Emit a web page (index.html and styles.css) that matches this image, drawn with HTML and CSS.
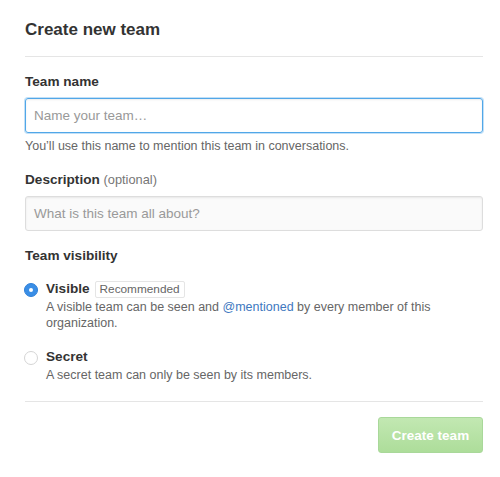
FILE: index.html
```html
<!DOCTYPE html>
<html>
<head>
<meta charset="utf-8">
<link rel="stylesheet" href="styles.css">
</head>
<body>
<div class="page">
  <h2 class="title">Create new team</h2>
  <div class="field">
    <label class="label">Team name</label>
    <div class="input focused"><span class="ph">Name your team…</span></div>
    <p class="note">You’ll use this name to mention this team in conversations.</p>
  </div>
  <div class="field">
    <label class="label">Description <span class="opt">(optional)</span></label>
    <div class="input muted"><span class="ph">What is this team all about?</span></div>
  </div>
  <div class="field vis">
    <label class="label">Team visibility</label>
    <div class="option first">
      <span class="radio on"></span>
      <div class="opt-body">
        <div class="opt-title">Visible <span class="badge">Recommended</span></div>
        <p class="opt-desc">A visible team can be seen and <span class="link">@mentioned</span> by every member of this organization.</p>
      </div>
    </div>
    <div class="option second">
      <span class="radio"></span>
      <div class="opt-body">
        <div class="opt-title">Secret</div>
        <p class="opt-desc">A secret team can only be seen by its members.</p>
      </div>
    </div>
  </div>
  <div class="actions">
    <button class="btn">Create team</button>
  </div>
</div>
</body>
</html>
```
FILE: styles.css
```css
* { box-sizing: border-box; }
body {
  margin: 0;
  background: #fff;
  font-family: "Liberation Sans", Arial, sans-serif;
  color: #333;
}
.page {
  width: 458px;
  margin-left: 25px;
  padding-top: 20px;
}
.title {
  margin: 0;
  font-size: 17px;
  line-height: 20px;
  font-weight: bold;
  padding-bottom: 16px;
  border-bottom: 1px solid #e5e5e5;
}
.field { margin-top: 15px; }
.label {
  display: block;
  font-size: 13.6px;
  line-height: 20px;
  font-weight: bold;
  margin-bottom: 6px;
}
.opt { font-weight: normal; color: #767676; font-size: 12.8px; }
.input {
  height: 35px;
  border: 1px solid #ddd;
  border-radius: 3px;
  padding: 0 8px;
  display: flex;
  align-items: center;
  font-size: 13.5px;
}
.input.focused {
  border-color: #51a7e8;
  box-shadow: 0 0 0 1px rgba(81,167,232,0.35), inset 0 1px 2px rgba(0,0,0,0.075);
}
.input.muted {
  background: #fafafa;
  box-shadow: inset 0 1px 2px rgba(0,0,0,0.075);
}
.ph { color: #999; }
.note {
  margin: 4px 0 0;
  font-size: 12.5px;
  line-height: 18px;
  color: #666;
}
.vis .label { margin-bottom: 14px; }
.option { display: flex; align-items: flex-start; }
.option.second { margin-top: 17px; }
.radio {
  width: 14px;
  height: 14px;
  border-radius: 50%;
  border: 1px solid #d5d5d5;
  background: #fff;
  margin-top: 3px;
  margin-left: -1px;
  margin-right: 8px;
  flex: none;
  display: flex;
  align-items: center;
  justify-content: center;
}
.radio.on {
  background: #3a8ee6;
  border-color: #2f80d8;
}
.radio.on::after {
  content: "";
  width: 4px;
  height: 4px;
  border-radius: 50%;
  background: #fff;
}
.opt-title {
  font-size: 13.6px;
  line-height: 18px;
  font-weight: bold;
  display: flex;
  align-items: center;
}
.badge {
  font-weight: normal;
  font-size: 11.8px;
  line-height: 15px;
  color: #666;
  border: 1px solid #e5e5e5;
  border-radius: 2px;
  padding: 0 4px;
  margin-left: 5px;
}
.opt-desc {
  margin: 1px 0 0;
  font-size: 12.5px;
  line-height: 16px;
  color: #666;
}
.link { color: #4078c0; }
.actions {
  margin-top: 18px;
  border-top: 1px solid #e5e5e5;
  padding-top: 15px;
  display: flex;
  justify-content: flex-end;
}
.btn {
  height: 36px;
  width: 105px;
  border: 1px solid #a9d89a;
  border-radius: 3px;
  background: linear-gradient(#c2e8b2, #addd9a);
  color: #fff;
  font-family: "Liberation Sans", Arial, sans-serif;
  font-size: 13.5px;
  font-weight: bold;
  padding: 0;
}
```
